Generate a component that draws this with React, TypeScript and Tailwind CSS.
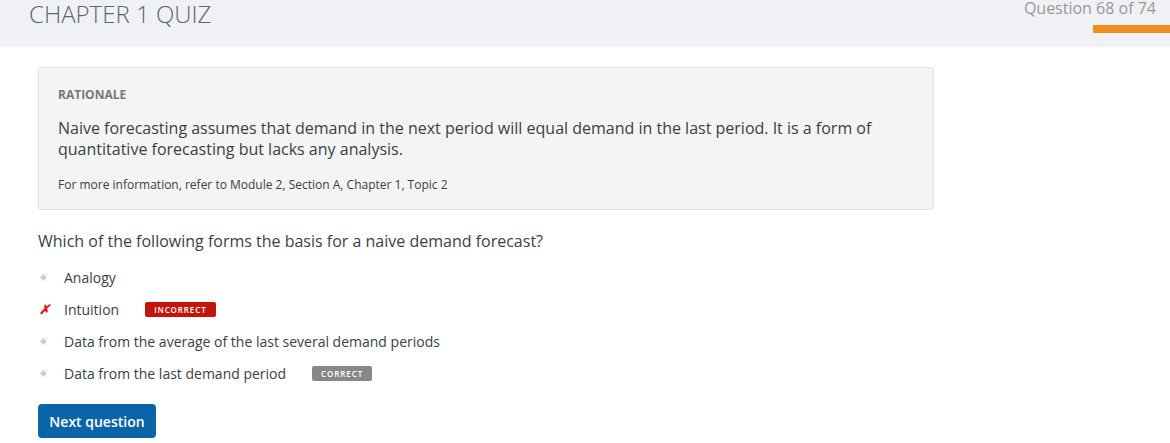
import React from "react";

const OPTIONS = [
  { text: "Analogy", status: "none" },
  { text: "Intuition", status: "incorrect" },
  { text: "Data from the average of the last several demand periods", status: "none" },
  { text: "Data from the last demand period", status: "correct" },
];

const App = () => {
  return (
    <div className="w-[1170px] h-[443px] bg-white overflow-hidden font-['Open_Sans',sans-serif] text-[#333]">
      {/* header */}
      <div className="h-[47px] bg-[#f0f1f5] flex justify-between">
        <h1 className="pl-[29px] text-[24px] leading-[28px] font-light text-[#5b6573]">
          CHAPTER 1 QUIZ
        </h1>
        <div className="flex flex-col items-end">
          <div className="pr-[14px] text-[16px] leading-[16px] text-[#999]">Question 68 of 74</div>
          <div className="mt-[9px] w-[77px] h-[8px] bg-[#f28c1f]" />
        </div>
      </div>

      <div className="pl-[38px]">
        {/* rationale box */}
        <div className="mt-[20px] w-[896px] h-[143px] bg-[#f4f4f4] border border-[#e3e3e3] rounded-[3px] px-[19px] pt-[19px]">
          <div className="text-[12px] leading-[16px] font-bold text-[#777]">RATIONALE</div>
          <p className="mt-[15px] text-[16px] leading-[21px] text-[#3a3f46]">
            Naive forecasting assumes that demand in the next period will equal demand in the last period. It is a form of
            <br />
            quantitative forecasting but lacks any analysis.
          </p>
          <p className="mt-[17px] text-[12px] leading-[16px] text-[#3a3f46]">
            For more information, refer to Module 2, Section A, Chapter 1, Topic 2
          </p>
        </div>

        {/* question */}
        <p className="mt-[20px] text-[16px] leading-[22px] text-[#3a3f46]">
          Which of the following forms the basis for a naive demand forecast?
        </p>

        <ul className="mt-[9px] flex flex-col">
          {OPTIONS.map((opt, index) => (
            <li key={index} className="h-[32px] flex items-center text-[14px] text-[#3a3f46]">
              <span className="w-[26px] flex items-center">
                {opt.status === "incorrect" ? (
                  <span className="ml-[1px] text-[13px] font-bold italic text-[#e0140f] leading-none">✗</span>
                ) : (
                  <span className="ml-[3px] w-[5px] h-[5px] rotate-45 bg-[#d0d0d0]" />
                )}
              </span>
              <span>{opt.text}</span>
              {opt.status === "incorrect" && (
                <span className="ml-[26px] h-[15px] px-[9px] bg-[#c4150c] rounded-[2px] text-white text-[8px] font-semibold tracking-[0.9px] leading-[15px]">
                  INCORRECT
                </span>
              )}
              {opt.status === "correct" && (
                <span className="ml-[26px] h-[15px] px-[9px] bg-[#888] rounded-[2px] text-white text-[8px] font-semibold tracking-[0.9px] leading-[15px]">
                  CORRECT
                </span>
              )}
            </li>
          ))}
        </ul>

        <button className="mt-[15px] w-[118px] h-[34px] bg-[#0a64a8] rounded-[4px] text-white text-[14px] font-semibold">
          Next question
        </button>
      </div>
    </div>
  );
};

export default App;
